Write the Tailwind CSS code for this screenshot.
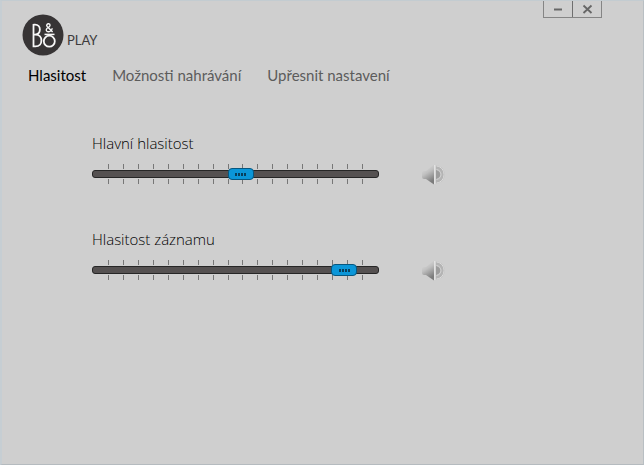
<!DOCTYPE html>
<html lang="cs">
<head>
    <meta charset="UTF-8">
    <meta name="viewport" content="width=device-width, initial-scale=1.0">
    <title>B&amp;O Play</title>
    <script src="https://cdn.jsdelivr.net/npm/@tailwindcss/browser@4"></script>
</head>
<body class="min-h-screen bg-[#cfcfcf] font-['Open_Sans',sans-serif]">

    <div class="min-h-screen border border-l-2 border-t-[#c3ccd1] border-r-[#b9bfc3] border-b-[#b5bbbf] border-l-[#c6ced3]">

        <!-- Header -->
        <header class="flex items-start justify-between pl-5 pr-[41px]">
            <svg class="mt-3 h-11 w-20" viewBox="22 13 80 44" role="img" aria-label="B&amp;O Play">
                <circle cx="43" cy="35" r="20.5" fill="#373435"/>
                <g fill="none" stroke="#f8f8f8" stroke-width="1.8">
                    <path d="M33.5 24V46.4H35.5C43.4 46.4 43.4 34.6 35.5 34.6H33.5M33.5 24.6H35C41.5 24.6 41.5 34.6 35 34.6"/>
                    <circle cx="49.3" cy="41.2" r="5.5"/>
                    <path d="M44.5 34.4H54.5" stroke-width="1.5"/>
                    <path d="M52.6 32L47.2 26.5C45.8 24.8 47.5 23.6 48.7 23.8C50.6 24.2 50.3 26.2 48.8 27.1C46 28.4 45.8 30.2 46.9 31.2C49 32.8 52 30.8 52.2 28.2" stroke-width="1.4"/>
                </g>
                <text x="67" y="45" class="fill-[#3d3b3c] font-['Lato'] text-[13px]">PLAY</text>
            </svg>
            <div class="flex divide-x divide-[#6f6f6f] border-x border-b border-[#858585]">
                <button type="button" aria-label="Minimalizovat" class="flex h-4 w-[29px] items-center justify-center">
                    <svg class="h-3 w-3" viewBox="0 0 12 12"><path d="M2 6.5H10" stroke="#666" stroke-width="2"/></svg>
                </button>
                <button type="button" aria-label="Zavřít" class="flex h-4 w-7 items-center justify-center">
                    <svg class="h-3 w-3" viewBox="0 0 12 12"><path d="M2.5 2.5L10.5 10M10.5 2.5L2.5 10" stroke="#666" stroke-width="1.8"/></svg>
                </button>
            </div>
        </header>

        <!-- Tabs -->
        <nav class="mt-2 flex gap-[26px] pl-[26px] font-['Lato'] text-[15px] leading-5 text-[#5c5c5c]">
            <a href="#hlasitost" class="text-black">Hlasitost</a>
            <a href="#nahravani">Možnosti nahrávání</a>
            <a href="#nastaveni">Upřesnit nastavení</a>
        </nav>

        <!-- Volume sliders -->
        <main id="hlasitost" class="mt-12 flex flex-col gap-[43px] pl-[90px]">
            <section>
                <label for="main-volume" class="block text-[15px] font-light leading-5 text-black">Hlavní hlasitost</label>
                <div class="mt-[9px] flex items-center gap-10">
                    <div class="relative flex h-5 w-[287px] items-center">
                        <div class="ticks absolute inset-0 flex justify-between px-4"></div>
                        <input type="range" id="main-volume" min="0" max="100" value="52" class="slider">
                    </div>
                    <button type="button" class="speaker" aria-label="Ztlumit hlavní hlasitost"></button>
                </div>
            </section>
            <section>
                <label for="record-volume" class="block text-[15px] font-light leading-5 text-black">Hlasitost záznamu</label>
                <div class="mt-[9px] flex items-center gap-10">
                    <div class="relative flex h-5 w-[287px] items-center">
                        <div class="ticks absolute inset-0 flex justify-between px-4"></div>
                        <input type="range" id="record-volume" min="0" max="100" value="92" class="slider">
                    </div>
                    <button type="button" class="speaker" aria-label="Ztlumit záznam"></button>
                </div>
            </section>
        </main>
    </div>

    <!-- Speaker icon shared by both mute buttons -->
    <template id="speaker-icon">
        <svg class="h-6 w-7" viewBox="0 0 28 24">
            <defs>
                <linearGradient id="cone" x1="0" y1="0" x2=".4" y2="1">
                    <stop offset="0" stop-color="#e4e4e4"/>
                    <stop offset=".5" stop-color="#c0c0c0"/>
                    <stop offset="1" stop-color="#7c7c7c"/>
                </linearGradient>
            </defs>
            <path d="M3 10Q3 9 4 9H7L15 2.5V22.5L7 17H5Q3 17 3 15Z" fill="url(#cone)"/>
            <path d="M15.7 3V22" stroke="#e4e4e4" stroke-width="1.2"/>
            <path d="M17 3.5C28.5 4.5 28.5 20.5 17 21.5Z" fill="#b4b4b4"/>
            <path d="M17 8C22.5 9 22.5 16 17 17Z" fill="#9c9c9c"/>
            <path d="M17.5 7.5C23.5 8.5 23.5 16.5 17.5 17.5" fill="none" stroke="#d4d4d4" stroke-width="1"/>
            <path d="M17.5 4C27.5 5 27.5 20 17.5 21" fill="none" stroke="#dcdcdc" stroke-width="1"/>
        </svg>
    </template>

    <script>
        const TICK_COUNT = 18;
        const tick = '<span class="flex w-px flex-col justify-between"><i class="h-[5px] bg-[#777]"></i><i class="h-[5px] bg-[#777]"></i></span>';
        const sliderClass = "relative m-0 h-3 w-full appearance-none bg-transparent [&::-webkit-slider-runnable-track]:h-2 [&::-webkit-slider-runnable-track]:rounded-[3px] [&::-webkit-slider-runnable-track]:border [&::-webkit-slider-runnable-track]:border-[#262626] [&::-webkit-slider-runnable-track]:bg-[#555151] [&::-webkit-slider-thumb]:-mt-[3px] [&::-webkit-slider-thumb]:h-3 [&::-webkit-slider-thumb]:w-[26px] [&::-webkit-slider-thumb]:appearance-none [&::-webkit-slider-thumb]:rounded-[4px] [&::-webkit-slider-thumb]:border [&::-webkit-slider-thumb]:border-[#07577f] [&::-webkit-slider-thumb]:bg-[#0b96d8] [&::-webkit-slider-thumb]:bg-[repeating-linear-gradient(90deg,#083f5c_0_2px,#0b96d8_2px_3px)] [&::-webkit-slider-thumb]:bg-[length:11px_3px] [&::-webkit-slider-thumb]:bg-center [&::-webkit-slider-thumb]:bg-no-repeat";

        document.querySelectorAll('.ticks').forEach((el) => {
            el.innerHTML = tick.repeat(TICK_COUNT);
        });
        document.querySelectorAll('.slider').forEach((el) => {
            el.className = sliderClass;
        });
        const icon = document.getElementById('speaker-icon');
        document.querySelectorAll('.speaker').forEach((el) => {
            el.appendChild(icon.content.cloneNode(true));
        });
    </script>

</body>
</html>
